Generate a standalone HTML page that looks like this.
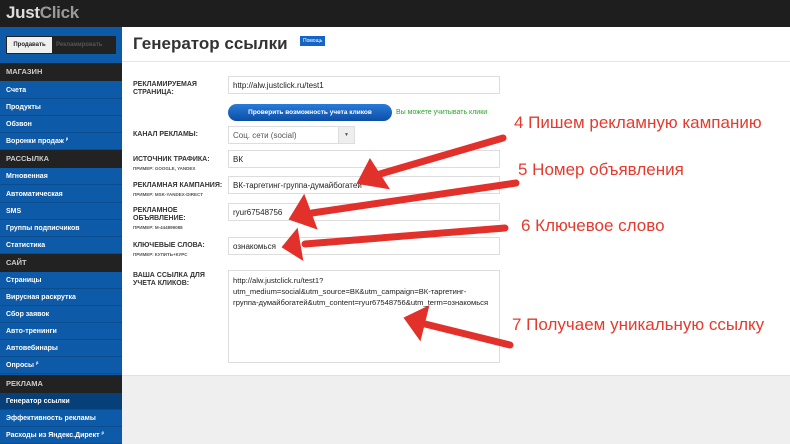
<!DOCTYPE html>
<html><head><meta charset="utf-8"><style>
*{margin:0;padding:0;box-sizing:border-box}
body{width:790px;height:444px;overflow:hidden;font-family:"Liberation Sans","Noto Sans CJK SC",sans-serif;background:#f2f2f2;position:relative}
.top{position:absolute;left:0;top:0;width:790px;height:27px;background:#1e1e1e}
.logo{position:absolute;left:6px;top:3px;font-size:17px;font-weight:bold;color:#ddd;letter-spacing:-0.3px}
.logo span{color:#999}
.side{position:absolute;left:0;top:27px;width:122px;height:417px;background:#0d5aa8}
.sb{position:absolute;left:0;width:122px;height:17px;font-size:7px;font-weight:bold;color:#fff;padding-left:6px;line-height:17px;border-bottom:1px solid #0a4c8e;overflow:hidden}
.sb sup{font-size:4px;line-height:0;vertical-align:3px}
.sh{position:absolute;left:0;width:122px;height:18px;background:#222;color:#ccc;font-size:7.5px;font-weight:bold;padding-left:6px;line-height:18px}
.main{position:absolute;left:122px;top:27px;width:668px;height:348px;background:#fff}
.bottom{position:absolute;left:122px;top:375px;width:668px;height:69px;background:#efefef;border-top:1px solid #e2e2e2}
.title{position:absolute;left:133px;top:34px;font-size:17px;font-weight:bold;color:#333}
.help{position:absolute;left:300px;top:36px;background:#1565c8;color:#fff;font-size:5px;padding:2px 3px}
.hr{position:absolute;left:122px;top:61px;width:668px;height:1px;background:#e6e6e6}
.lbl{position:absolute;left:133px;font-size:7px;font-weight:bold;color:#333;line-height:8px}
.ex{display:block;font-size:4.5px;color:#555;margin-top:1px}
.inp{position:absolute;left:228px;width:272px;height:18px;border:1px solid #ddd;background:#fff;font-size:8px;color:#222;padding:4px 4px}
.red{position:absolute;color:#e63a2e;font-size:17px;white-space:nowrap}
</style></head><body>
<div class="top"><div class="logo">Just<span>Click</span></div></div>
<div class="side">
<div style="position:absolute;left:6px;top:9px;width:110px;height:18px;background:#222"></div>
<div style="position:absolute;left:7px;top:10px;width:45px;height:16px;background:#f0f0f0;font-size:6px;font-weight:bold;color:#222;text-align:center;line-height:16px">Продавать</div>
<div style="position:absolute;left:56px;top:10px;font-size:6px;font-weight:bold;color:#555;line-height:16px">Рекламировать</div>
</div>
<div class="sh" style="top:63px">МАГАЗИН</div>
<div class="sb" style="top:82px">Счета</div>
<div class="sb" style="top:99px">Продукты</div>
<div class="sb" style="top:116px">Обзвон</div>
<div class="sb" style="top:133px">Воронки продаж <sup>β</sup></div>
<div class="sh" style="top:150px">РАССЫЛКА</div>
<div class="sb" style="top:168px">Мгновенная</div>
<div class="sb" style="top:186px">Автоматическая</div>
<div class="sb" style="top:203px">SMS</div>
<div class="sb" style="top:220px">Группы подписчиков</div>
<div class="sb" style="top:237px">Статистика</div>
<div class="sh" style="top:254px">САЙТ</div>
<div class="sb" style="top:272px">Страницы</div>
<div class="sb" style="top:289px">Вирусная раскрутка</div>
<div class="sb" style="top:306px">Сбор заявок</div>
<div class="sb" style="top:323px">Авто-тренинги</div>
<div class="sb" style="top:340px">Автовебинары</div>
<div class="sb" style="top:357px">Опросы <sup>β</sup></div>
<div class="sh" style="top:375px">РЕКЛАМА</div>
<div class="sb" style="top:393px;background:#073f78">Генератор ссылки</div>
<div class="sb" style="top:410px">Эффективность рекламы</div>
<div class="sb" style="top:427px">Расходы из Яндекс.Директ <sup>β</sup></div>

<div class="main"></div>
<div class="bottom"></div>
<div class="title">Генератор ссылки</div>
<div class="help">Помощь</div>
<div class="hr"></div>

<div class="lbl" style="top:81px">РЕКЛАМИРУЕМАЯ<br>СТРАНИЦА:</div>
<div class="inp" style="top:76px">http://alw.justclick.ru/test1</div>
<div style="position:absolute;left:228px;top:104px;width:164px;height:17px;border-radius:9px;background:linear-gradient(#2a7ad8,#0c4ea6);color:#fff;font-size:6.5px;font-weight:bold;text-align:center;line-height:17px">Проверить возможность учета кликов</div>
<div style="position:absolute;left:396px;top:109px;font-size:7px;color:#2aa52a">Вы можете учитывать клики</div>
<div class="lbl" style="top:131px">КАНАЛ РЕКЛАМЫ:</div>
<div class="inp" style="top:126px;width:127px;color:#555">Соц. сети (social)</div>
<div style="position:absolute;left:338px;top:127px;width:16px;height:16px;background:#eee;border-left:1px solid #ddd;font-size:5px;text-align:center;line-height:16px;color:#555">▼</div>
<div class="lbl" style="top:156px">ИСТОЧНИК ТРАФИКА:<span class="ex">ПРИМЕР: GOOGLE, YANDEX</span></div>
<div class="inp" style="top:150px">ВК</div>
<div class="lbl" style="top:182px">РЕКЛАМНАЯ КАМПАНИЯ:<span class="ex">ПРИМЕР: MSK-YANDEX-DIRECT</span></div>
<div class="inp" style="top:176px">ВК-таргетинг-группа-думайбогатей</div>
<div class="lbl" style="top:207px">РЕКЛАМНОЕ<br>ОБЪЯВЛЕНИЕ:<span class="ex">ПРИМЕР: M-444899088</span></div>
<div class="inp" style="top:203px">ryur67548756</div>
<div class="lbl" style="top:242px">КЛЮЧЕВЫЕ СЛОВА:<span class="ex">ПРИМЕР: КУПИТЬ+КУРС</span></div>
<div class="inp" style="top:237px">ознакомься</div>
<div class="lbl" style="top:272px">ВАША ССЫЛКА ДЛЯ<br>УЧЕТА КЛИКОВ:</div>
<div class="inp" style="top:270px;height:93px;line-height:11px;font-size:7.6px">http://alw.justclick.ru/test1?<br>utm_medium=social&amp;utm_source=ВК&amp;utm_campaign=ВК-таргетинг-<br>группа-думайбогатей&amp;utm_content=ryur67548756&amp;utm_term=ознакомься</div>

<svg style="position:absolute;left:0;top:0" width="790" height="444">
<g fill="#e2302a" stroke="#e2302a" stroke-linecap="round">
<line x1="503" y1="138" x2="380" y2="174" stroke-width="7"/>
<polygon points="358,183 370,160 388,188" stroke-width="2"/>
<line x1="516" y1="183" x2="312" y2="213" stroke-width="7"/>
<polygon points="290,219 304,196 316,228" stroke-width="2"/>
<line x1="505" y1="228" x2="305" y2="244" stroke-width="7"/>
<polygon points="283,247 297,230 302,259" stroke-width="2"/>
<line x1="510" y1="345" x2="425" y2="324" stroke-width="7"/>
<polygon points="405,318 428,307 420,339" stroke-width="2"/>
</g>
</svg>
<div class="red" style="left:514px;top:113px">4 Пишем рекламную кампанию</div>
<div class="red" style="left:518px;top:160px">5 Номер объявления</div>
<div class="red" style="left:521px;top:216px">6 Ключевое слово</div>
<div class="red" style="left:512px;top:315px">7 Получаем уникальную ссылку</div>
</body></html>
